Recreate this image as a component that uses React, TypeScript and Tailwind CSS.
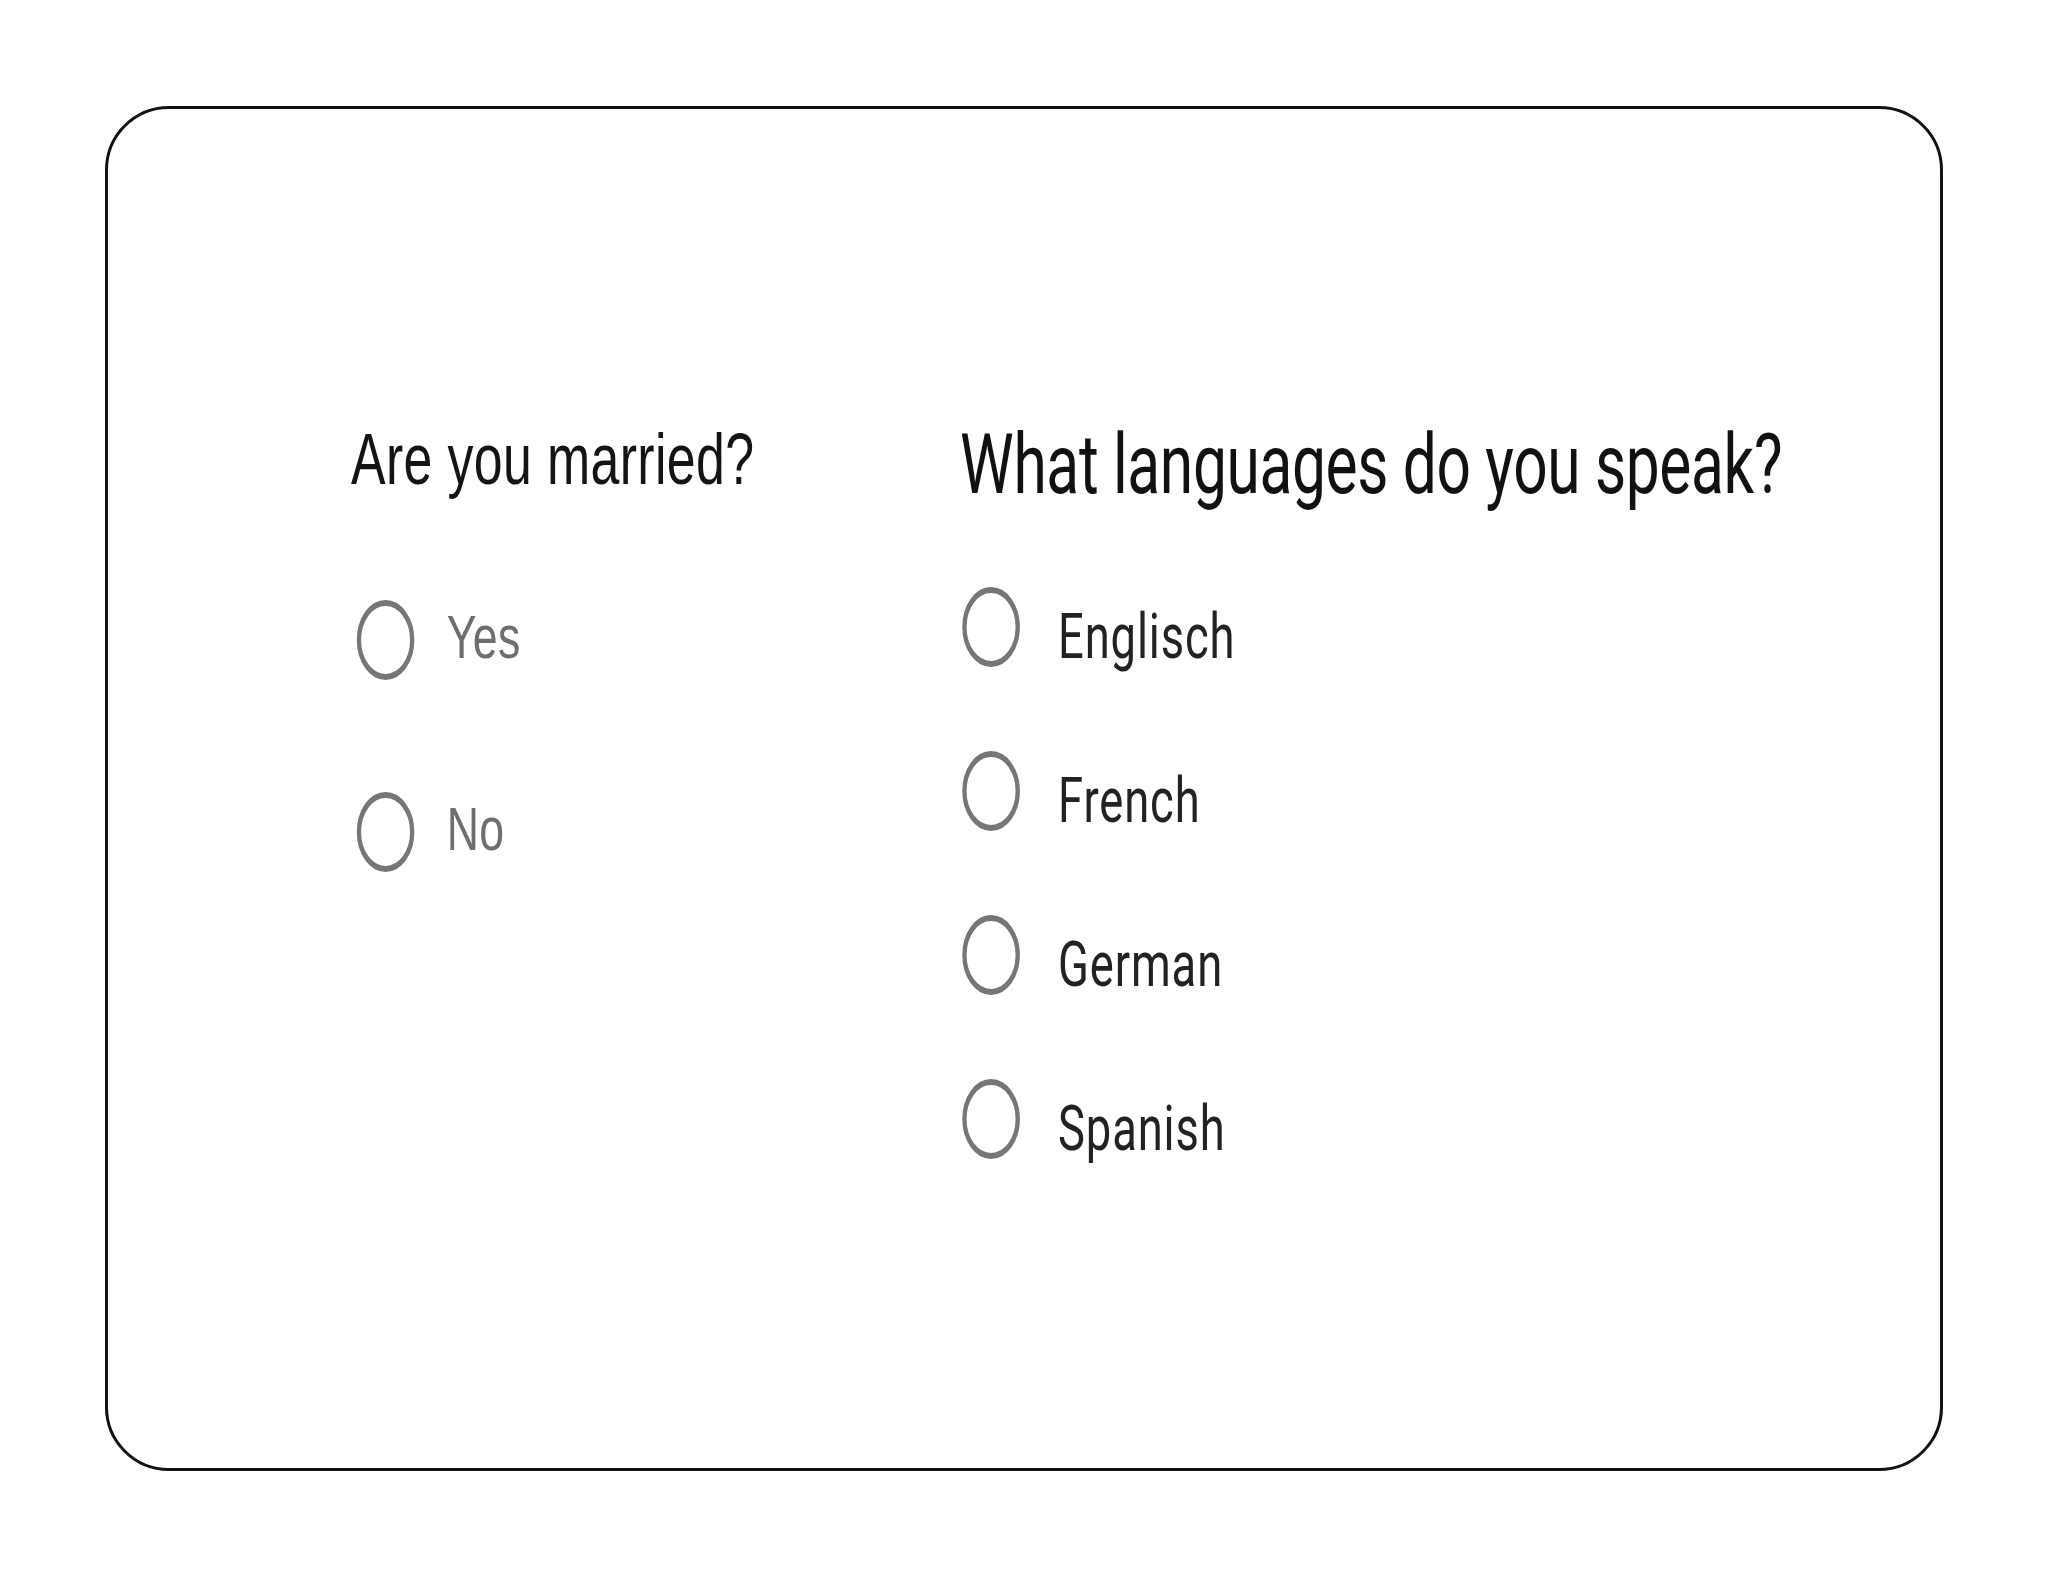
export default function App() {
  const left = ["Yes", "No"];
  const right = ["Englisch", "French", "German", "Spanish"];
  return (
    <div className="min-h-screen bg-white pt-[106px] pl-[105px]">
      <div className="w-[1838px] h-[1365px] border-[3px] border-[#111] rounded-[64px] overflow-hidden pt-[314px] pl-[243px]">
        <div className="flex w-[2100px] origin-left scale-x-[0.72]">
          <div className="w-[849px] shrink-0 flex flex-col font-['Liberation_Sans',Arial,sans-serif]">
            <div className="text-[72px] leading-none tracking-[0.5px] text-[#141414] whitespace-nowrap">Are you married?</div>
            <div className="mt-[105px] flex flex-col gap-[112px] pl-[8px]">
              {left.map((t) => (
                <div key={t} className="flex items-start">
                  <div className="w-20 h-20 shrink-0 rounded-full border-[6px] border-[#767676]" />
                  <span className="ml-[45px] mt-[6px] text-[62px] leading-none tracking-[0.5px] text-[#6e6e6e] whitespace-nowrap">{t}</span>
                </div>
              ))}
            </div>
          </div>
          <div className="flex flex-col font-['Roboto',sans-serif]">
            <div className="-ml-[3px] text-[84px] leading-none tracking-[-0.5px] text-[#111] whitespace-nowrap">What languages do you speak?</div>
            <div className="mt-[80px] flex flex-col gap-[83px]">
              {right.map((t) => (
                <div key={t} className="flex items-start">
                  <div className="w-20 h-20 shrink-0 rounded-full border-[6px] border-[#767676]" />
                  <span className="ml-[53px] mt-[18px] text-[63px] leading-none tracking-[1.2px] text-[#222] whitespace-nowrap">{t}</span>
                </div>
              ))}
            </div>
          </div>
        </div>
      </div>
    </div>
  );
}
